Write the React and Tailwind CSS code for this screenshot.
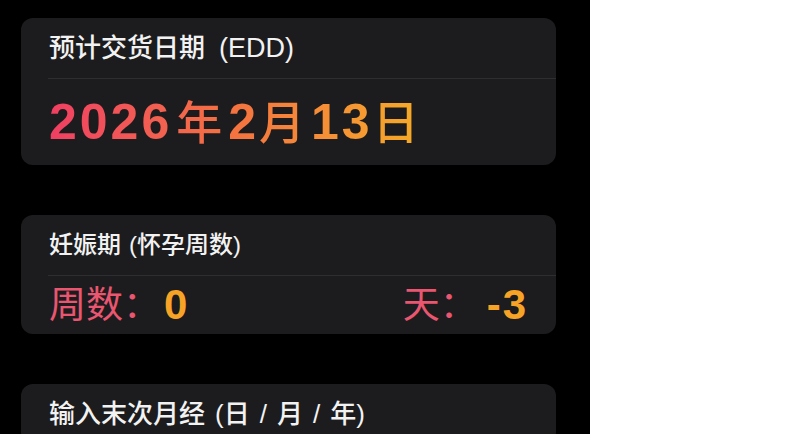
export default function App() {
  const font = { fontFamily: '"Liberation Sans", "Noto Sans CJK SC", sans-serif' };
  return (
    <div className="flex h-[434px] w-[800px] overflow-hidden bg-white" style={font}>
      <div className="flex h-full w-[590px] flex-col gap-[50px] bg-black pl-[21px] pt-[18px]">
        <div className="w-[535px] rounded-[12px] bg-[#1c1c1e]">
          <div className="flex h-[60px] items-center pl-[28px] text-[26px] font-medium text-[#f2f2f2]">
            <span>预计交货日期</span>
            <span className="ml-[14px] text-[27px]">(EDD)</span>
          </div>
          <div className="ml-[27px] h-px bg-[#2e2e30]" />
          <div className="flex h-[86px] items-center pl-[28px]">
            <span className="bg-gradient-to-r from-[#f03e62] via-[#f4733f] to-[#f5ab25] bg-clip-text pr-[4px] text-[50px] font-bold leading-none text-transparent">
              <span className="tracking-[3px]">2026</span>
              <span className="ml-[4px] text-[46px] font-medium">年</span>
              <span className="ml-[6px] tracking-[2px]">2</span>
              <span className="ml-[1px] text-[46px] font-medium">月</span>
              <span className="ml-[6px] tracking-[3px]">13</span>
              <span className="ml-[0px] text-[46px] font-medium">日</span>
            </span>
          </div>
        </div>

        <div className="w-[535px] rounded-[12px] bg-[#1c1c1e]">
          <div className="flex h-[60px] items-center pl-[28px] text-[24px] font-medium text-[#f2f2f2]">
            <span>妊娠期</span>
            <span className="ml-[8px]">(怀孕周数)</span>
          </div>
          <div className="ml-[27px] h-px bg-[#2e2e30]" />
          <div className="flex h-[58px] items-center justify-between pl-[28px] pr-[28px] leading-none">
            <div className="flex items-center">
              <span className="text-[37px] text-[#ea5570]">周数：</span>
              <span className="ml-[4px] text-[42px] font-bold text-[#f7a326]">0</span>
            </div>
            <div className="flex items-center">
              <span className="text-[37px] text-[#ea5570]">天：</span>
              <span className="ml-[10px] text-[42px] font-bold tracking-[2px] text-[#f7a326]">-3</span>
            </div>
          </div>
        </div>

        <div className="h-[120px] w-[535px] rounded-[12px] bg-[#1c1c1e]">
          <div className="flex h-[60px] items-center pl-[28px] text-[26px] font-medium text-[#f2f2f2]">
            <span>输入末次月经</span>
            <span className="ml-[10px]">(日</span>
            <span className="mx-[10px]">/</span>
            <span>月</span>
            <span className="mx-[10px]">/</span>
            <span>年)</span>
          </div>
        </div>
      </div>
    </div>
  );
}
